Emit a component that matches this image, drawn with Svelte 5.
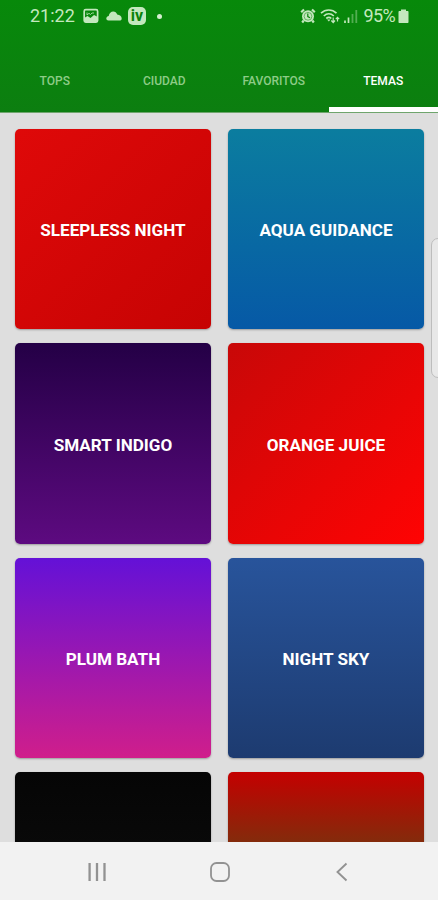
<script lang="ts">
	interface Theme {
		name?: string;
		background: string;
	}

	const tabs = ['Tops', 'Ciudad', 'Favoritos', 'Temas'];

	const themes: Theme[] = [
		{ name: 'Sleepless Night', background: 'linear-gradient(135deg, #df0909, #c60303)' },
		{ name: 'Aqua Guidance', background: 'linear-gradient(180deg, #0b7d9f, #0659a6)' },
		{ name: 'Smart Indigo', background: 'linear-gradient(180deg, #240046, #5d0a80)' },
		{ name: 'Orange Juice', background: 'linear-gradient(135deg, #c80808, #ff0303)' },
		{ name: 'Plum Bath', background: 'linear-gradient(180deg, #6411d7, #d01e8b)' },
		{ name: 'Night Sky', background: 'linear-gradient(180deg, #28549b, #1d3b70)' },
		{ background: 'linear-gradient(180deg, #050505, #101010)' },
		{ background: 'linear-gradient(180deg, #c40000, #0c7a20)' }
	];

	let active = $state('Temas');
</script>

<div class="screen">
	<header>
		<div class="status-bar">
			<div class="status-left">
				<span class="clock">21:22</span>
				<svg class="picture" width="16" height="16" viewBox="0 0 16 16">
					<rect x="1.2" y="1.7" width="13.4" height="12.4" rx="1.5" fill="none" stroke="currentColor" stroke-width="1.7" />
					<path d="M2 14V9.500l2.500-1.500L7.500 10l3.500-3 3 1.500V14z" fill="currentColor" />
					<path d="M4 4.500v2.500l2-1.700 1.500 1.200L9 5h2" fill="none" stroke="currentColor" stroke-width="0.8" />
				</svg>
				<svg class="cloud" width="16" height="10" viewBox="0 0 16 10">
					<path d="M2.500 9.500C.8 9.500.2 8.500.3 7.300.5 5.900 1.500 5.200 2.700 5 3.300 2.200 5 .5 7.200.5c2 0 3.300 1.300 4 3 2.600.2 4.500 1.700 4.500 3.900 0 1.300-.8 2.100-2.200 2.100z" fill="currentColor" />
				</svg>
				<span class="app-badge">iv</span>
				<span class="dot"></span>
			</div>
			<div class="status-right">
				<svg class="alarm" width="16" height="16" viewBox="0 0 16 16">
					<circle cx="8" cy="8.300" r="6" fill="currentColor" />
					<path d="M1.200 4.200 4 1.500M14.800 4.200 12 1.500M3.700 12.500 2.200 14.500M12.300 12.500l1.500 2" stroke="currentColor" stroke-width="2.200" />
					<path d="M7.800 5.500v3.100l2.200 1.200" fill="none" stroke="#0a830b" stroke-width="1.200" />
					<circle cx="8" cy="8.300" r="3.900" fill="none" stroke="#0a830b" stroke-width="0.500" />
				</svg>
				<svg class="wifi" width="20" height="16" viewBox="0 0 20 16">
					<path d="M1 5.200c4.500-4.300 11-4.300 15.500 0M3.800 8c3-2.800 7-2.800 10 0M6.300 10.500c1.600-1.400 3.500-1.400 5 0" fill="none" stroke="currentColor" stroke-width="1.700" />
					<path d="m8.800 13.500-1.700-2h3.400z" fill="currentColor" />
					<path d="M13.200 9.500v5M11.300 12.500l1.900 2 1.800-2M17.500 13.500v-4M15.800 11.200l1.700-1.800 1.700 1.800" fill="none" stroke="currentColor" stroke-width="1.200" />
				</svg>
				<svg class="signal" width="14" height="15" viewBox="0 0 14 15">
					<path d="M1 11.500v2.500M4.500 8.500V14" stroke="currentColor" stroke-width="1.700" />
					<path d="M8.500 5v9M12.300 1v13" stroke="currentColor" stroke-width="1.800" opacity="0.4" />
				</svg>
				<span class="percent">95%</span>
				<svg class="battery" width="11" height="15" viewBox="0 0 11 15">
					<path d="M3 .5h5v1.600h1.500c.6 0 1 .4 1 1V13c0 .6-.4 1-1 1h-8c-.6 0-1-.4-1-1V3.100c0-.6.4-1 1-1H3z" fill="currentColor" />
				</svg>
			</div>
		</div>
		<nav class="tabs">
			{#each tabs as tab}
				<button class="tab" class:active={tab === active} onclick={() => (active = tab)}>
					{tab}
				</button>
			{/each}
		</nav>
	</header>

	<main>
		<div class="theme-grid">
			{#each themes as theme}
				<div class="theme-card" style="background: {theme.background}">{theme.name ?? ''}</div>
			{/each}
		</div>
	</main>

	<footer>
		<svg width="20" height="20" viewBox="0 0 20 20">
			<path d="M2.600 1v18M10 1v18M17.500 1v18" stroke="currentColor" stroke-width="2.300" />
		</svg>
		<svg width="20" height="20" viewBox="0 0 20 20">
			<rect x="1" y="1" width="18" height="18" rx="5.500" fill="none" stroke="currentColor" stroke-width="1.800" />
		</svg>
		<svg width="20" height="20" viewBox="0 0 20 20">
			<path d="M14.500 1.500 5.500 10l9 8.500" fill="none" stroke="currentColor" stroke-width="1.900" />
		</svg>
	</footer>

	<div class="edge-handle"></div>
</div>

<style>
	:global(body) {
		margin: 0;
	}

	.screen {
		position: relative;
		display: flex;
		flex-direction: column;
		width: 438px;
		height: 900px;
		overflow: hidden;
		background: #dedede;
		font-family: Roboto, sans-serif;
	}

	header {
		display: flex;
		flex-direction: column;
		height: 112px;
		flex: none;
		background: linear-gradient(180deg, #07890a, #0c7e10);
		border-bottom: 1px solid #6fa56d;
	}

	.status-bar {
		display: flex;
		justify-content: space-between;
		height: 32px;
		padding: 0 29px 0 30px;
		color: #c3e8bd;
	}

	.status-left,
	.status-right {
		display: flex;
		align-items: center;
	}

	.clock,
	.percent {
		font-size: 18px;
		line-height: 32px;
	}

	.clock {
		width: 46px;
	}

	.picture {
		margin-left: 7px;
	}

	.cloud {
		margin-left: 7px;
	}

	.app-badge {
		width: 18px;
		height: 18px;
		margin-left: 6px;
		border-radius: 5px;
		background: #c3e8bd;
		color: #0a820b;
		font-size: 16px;
		font-weight: 700;
		line-height: 18px;
		text-align: center;
	}

	.dot {
		width: 5px;
		height: 5px;
		margin-left: 11px;
		border-radius: 50%;
		background: #d5efd0;
	}

	.wifi {
		margin-left: 4px;
	}

	.signal {
		margin-left: 4px;
	}

	.percent {
		margin-left: 5px;
		letter-spacing: -0.6px;
	}

	.battery {
		margin-left: 3px;
	}

	.tabs {
		display: grid;
		grid-template-columns: repeat(4, 1fr);
		flex: 1;
	}

	.tab {
		padding: 23px 0 0;
		border: 0;
		border-bottom: 5px solid transparent;
		background: none;
		color: #8dcc87;
		font: 500 12px Roboto, sans-serif;
		text-transform: uppercase;
	}

	.tab.active {
		border-bottom-color: #fff;
		color: #fff;
	}

	main {
		flex: 1;
		min-height: 0;
		overflow: hidden;
		padding: 16.200px 14px 0 15px;
	}

	.theme-grid {
		display: grid;
		grid-template-columns: 196px 196px;
		grid-auto-rows: 200.300px;
		gap: 14px 17px;
	}

	.theme-card {
		display: flex;
		align-items: center;
		justify-content: center;
		box-sizing: border-box;
		padding: 2px 0 0;
		border-radius: 5px;
		box-shadow: 0 1px 2px rgba(0, 0, 0, 0.3);
		color: #fff;
		font-size: 17.100px;
		font-weight: 700;
		text-transform: uppercase;
	}

	footer {
		display: flex;
		align-items: center;
		justify-content: space-between;
		height: 58px;
		flex: none;
		box-sizing: border-box;
		padding: 1px 86px 0 87px;
		background: #f2f2f2;
		color: #929292;
	}

	.edge-handle {
		position: absolute;
		top: 238px;
		right: -8px;
		width: 13px;
		height: 138px;
		border: 1px solid #bdbdbd;
		border-radius: 7px;
		background: #e8e8e8;
	}
</style>
